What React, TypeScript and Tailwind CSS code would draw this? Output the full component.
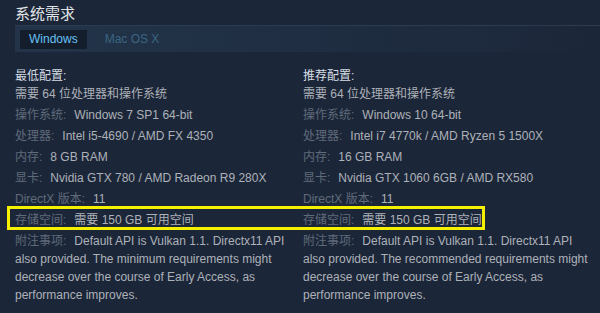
import React from 'react';

type Row = { label?: string; value: string };

const minRows: Row[] = [
  { value: '需要 64 位处理器和操作系统' },
  { label: '操作系统:', value: 'Windows 7 SP1 64-bit' },
  { label: '处理器:', value: 'Intel i5-4690 / AMD FX 4350' },
  { label: '内存:', value: '8 GB RAM' },
  { label: '显卡:', value: 'Nvidia GTX 780 / AMD Radeon R9 280X' },
  { label: 'DirectX 版本:', value: '11' },
  { label: '存储空间:', value: '需要 150 GB 可用空间' },
  {
    label: '附注事项:',
    value:
      'Default API is Vulkan 1.1. Directx11 API also provided. The minimum requirements might decrease over the course of Early Access, as performance improves.',
  },
];

const recRows: Row[] = [
  { value: '需要 64 位处理器和操作系统' },
  { label: '操作系统:', value: 'Windows 10 64-bit' },
  { label: '处理器:', value: 'Intel i7 4770k / AMD Ryzen 5 1500X' },
  { label: '内存:', value: '16 GB RAM' },
  { label: '显卡:', value: 'Nvidia GTX 1060 6GB / AMD RX580' },
  { label: 'DirectX 版本:', value: '11' },
  { label: '存储空间:', value: '需要 150 GB 可用空间' },
  {
    label: '附注事项:',
    value:
      'Default API is Vulkan 1.1. Directx11 API also provided. The recommended requirements might decrease over the course of Early Access, as performance improves.',
  },
];

function Column({ title, rows, className }: { title: string; rows: Row[]; className: string }) {
  return (
    <div className={className}>
      <div className="text-[12px] leading-[18px] text-[#d6dde3]">{title}</div>
      <ul className="flex flex-col gap-[3px]">
        {rows.map((r, i) => (
          <li key={i} className="text-[12px] leading-[18px] text-[#acb2b8]">
            {r.label && <span className="text-[#5f6b79] mr-[8px]">{r.label}</span>}
            {r.value}
          </li>
        ))}
      </ul>
    </div>
  );
}

export default function App() {
  return (
    <div
      className="w-[600px] h-[313px] overflow-hidden bg-[#1c2639] relative"
      style={{ fontFamily: '"Liberation Sans", "Noto Sans CJK SC", sans-serif' }}
    >
      <div className="pl-[15px] pt-[5px] text-[15px] leading-[18px] text-[#e2e5e8]">系统需求</div>
      <div className="ml-[15px] mt-[2px] h-[27px] flex items-center gap-[2px] px-[5px] bg-gradient-to-r from-[#23344a] via-[#1f2e42] to-[#1c2639] border-t border-[#2a3b52]">
        <div className="px-[9px] h-[19px] flex items-center bg-[#141d2b] text-[12px] text-[#67c1f5]">Windows</div>
        <div className="px-[16px] h-[19px] flex items-center text-[12px] text-[#3b6583]">Mac OS X</div>
      </div>
      <div className="flex pl-[15px] pt-[15px]">
        <Column title="最低配置:" rows={minRows} className="w-[288px] shrink-0 pr-[6px]" />
        <Column title="推荐配置:" rows={recRows} className="flex-1 pr-[6px]" />
      </div>
      <div className="absolute left-[7px] top-[206px] w-[478px] h-[24px] border-[3px] border-[#f4f000]" />
    </div>
  );
}
